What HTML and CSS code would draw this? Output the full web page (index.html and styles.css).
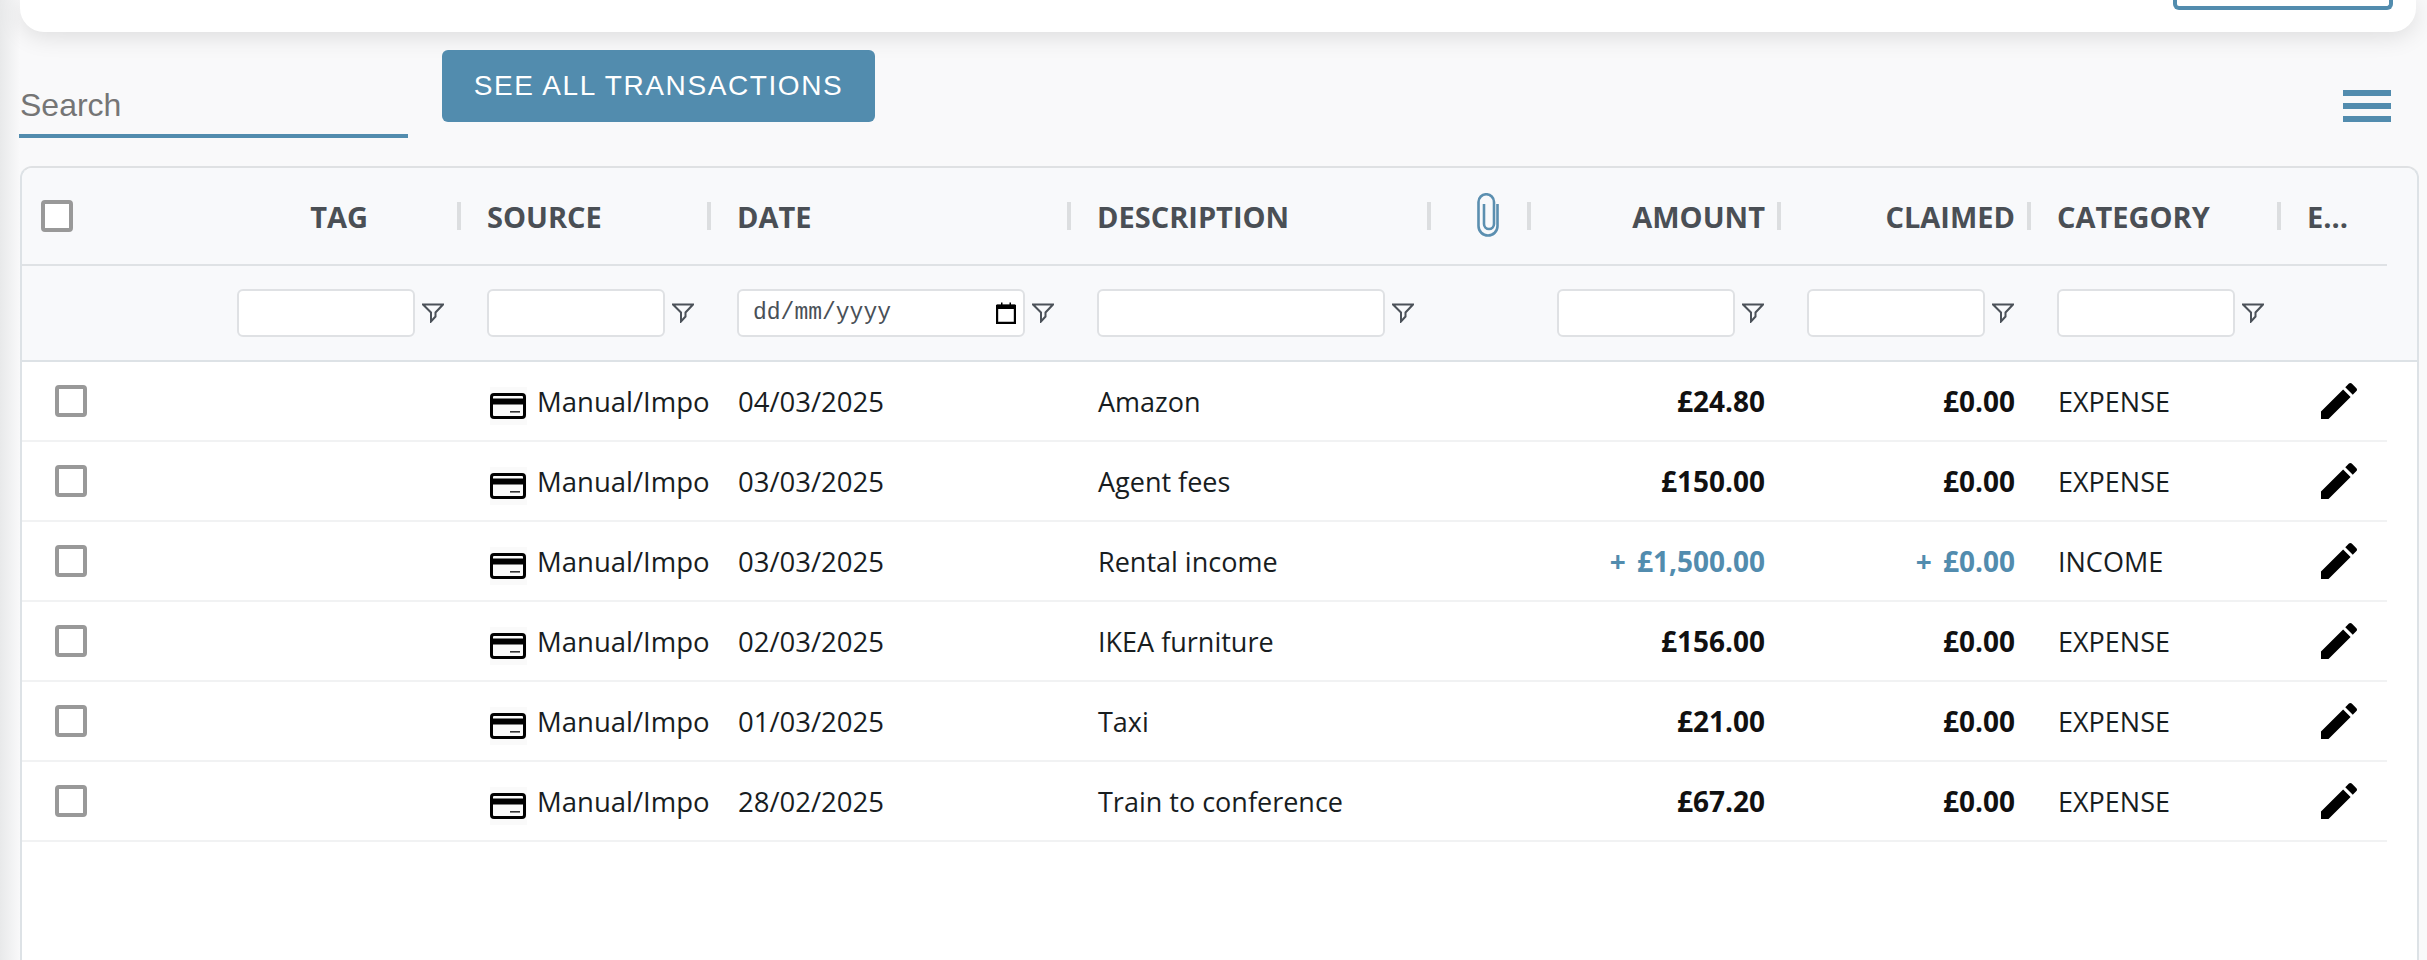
FILE: index.html
```html
<!DOCTYPE html>
<html lang="en">
<head>
    <meta charset="UTF-8">
    <title>Transactions</title>
    <link rel="stylesheet" href="styles.css">
</head>
<body>
    <svg class="defs" width="0" height="0">
        <symbol id="funnel" viewBox="0 0 22 20">
            <path d="M1 1.5H21L13.5 9.5V13.5L9 18.5V9.5Z" fill="none" stroke="#4b5158" stroke-width="2"/>
        </symbol>
        <symbol id="card" viewBox="0 0 36 26">
            <rect x="1.5" y="1.5" width="33" height="23" rx="2.5" fill="none" stroke="#000" stroke-width="3"/>
            <rect x="2" y="5.5" width="32" height="6" fill="#000"/>
            <rect x="20" y="18" width="10" height="1.6" fill="#333"/>
        </symbol>
        <symbol id="pencil" viewBox="0 0 24 24">
            <path d="M3 17.25V21h3.75L17.81 9.94l-3.75-3.75L3 17.25zM20.71 7.04c.39-.39.39-1.02 0-1.41l-2.34-2.34c-.39-.39-1.02-.39-1.41 0l-1.83 1.83 3.75 3.75 1.83-1.83z"/>
        </symbol>
    </svg>

    <div class="top-card">
        <div class="outline-btn"></div>
    </div>

    <div class="toolbar">
        <input class="search" type="text" placeholder="Search">
        <button class="see-all" type="button">SEE ALL TRANSACTIONS</button>
        <div class="menu-icon"><span></span><span></span><span></span></div>
    </div>

    <div class="grid">
        <div class="row head-row">
            <div class="cell check-head"><input type="checkbox"></div>
            <div class="cell head right tag-head">TAG</div>
            <div class="cell head">SOURCE</div>
            <div class="cell head">DATE</div>
            <div class="cell head">DESCRIPTION</div>
            <div class="cell head clip-head">
                <svg width="24" height="46" viewBox="0 0 24 46"><path d="M21.5 11V33a9.5 9.5 0 0 1-19 0V9a7.75 7.75 0 0 1 15.5 0V31a5 5 0 0 1-10 0V11" fill="none" stroke="#5b8fb0" stroke-width="2.6"/></svg>
            </div>
            <div class="cell head right">AMOUNT</div>
            <div class="cell head right">CLAIMED</div>
            <div class="cell head">CATEGORY</div>
            <div class="cell head no-sep">E...</div>
        </div>

        <div class="row filter-row">
            <div class="cell"></div>
            <div class="cell filter"><input type="text"><svg class="funnel"><use href="#funnel"/></svg></div>
            <div class="cell filter"><input type="text"><svg class="funnel"><use href="#funnel"/></svg></div>
            <div class="cell filter">
                <div class="date-input">
                    <span>dd/mm/yyyy</span>
                    <svg width="20" height="22" viewBox="0 0 20 22"><path d="M1 4H19V21H1Z" fill="none" stroke="#000" stroke-width="2.4"/><path d="M1 2.5H5V0.5H6.5V2.5H13.5V0.5H15V2.5H19V7H1Z"/></svg>
                </div>
                <svg class="funnel"><use href="#funnel"/></svg>
            </div>
            <div class="cell filter"><input type="text"><svg class="funnel"><use href="#funnel"/></svg></div>
            <div class="cell"></div>
            <div class="cell filter"><input type="text"><svg class="funnel"><use href="#funnel"/></svg></div>
            <div class="cell filter"><input type="text"><svg class="funnel"><use href="#funnel"/></svg></div>
            <div class="cell filter"><input type="text"><svg class="funnel"><use href="#funnel"/></svg></div>
            <div class="cell"></div>
        </div>

        <div class="row body-row">
            <div class="cell check-cell"><input type="checkbox"></div>
            <div class="cell"></div>
            <div class="cell source"><span class="card-wrap"><svg width="36" height="26"><use href="#card"/></svg></span><span class="source-text">Manual/Import</span></div>
            <div class="cell date">04/03/2025</div>
            <div class="cell">Amazon</div>
            <div class="cell"></div>
            <div class="cell money">£24.80</div>
            <div class="cell money">£0.00</div>
            <div class="cell">EXPENSE</div>
            <div class="cell edit"><svg width="48" height="48"><use href="#pencil"/></svg></div>
        </div>
        <div class="row body-row">
            <div class="cell check-cell"><input type="checkbox"></div>
            <div class="cell"></div>
            <div class="cell source"><span class="card-wrap"><svg width="36" height="26"><use href="#card"/></svg></span><span class="source-text">Manual/Import</span></div>
            <div class="cell date">03/03/2025</div>
            <div class="cell">Agent fees</div>
            <div class="cell"></div>
            <div class="cell money">£150.00</div>
            <div class="cell money">£0.00</div>
            <div class="cell">EXPENSE</div>
            <div class="cell edit"><svg width="48" height="48"><use href="#pencil"/></svg></div>
        </div>
        <div class="row body-row">
            <div class="cell check-cell"><input type="checkbox"></div>
            <div class="cell"></div>
            <div class="cell source"><span class="card-wrap"><svg width="36" height="26"><use href="#card"/></svg></span><span class="source-text">Manual/Import</span></div>
            <div class="cell date">03/03/2025</div>
            <div class="cell">Rental income</div>
            <div class="cell"></div>
            <div class="cell money income">+&nbsp;£1,500.00</div>
            <div class="cell money income">+&nbsp;£0.00</div>
            <div class="cell">INCOME</div>
            <div class="cell edit"><svg width="48" height="48"><use href="#pencil"/></svg></div>
        </div>
        <div class="row body-row">
            <div class="cell check-cell"><input type="checkbox"></div>
            <div class="cell"></div>
            <div class="cell source"><span class="card-wrap"><svg width="36" height="26"><use href="#card"/></svg></span><span class="source-text">Manual/Import</span></div>
            <div class="cell date">02/03/2025</div>
            <div class="cell">IKEA furniture</div>
            <div class="cell"></div>
            <div class="cell money">£156.00</div>
            <div class="cell money">£0.00</div>
            <div class="cell">EXPENSE</div>
            <div class="cell edit"><svg width="48" height="48"><use href="#pencil"/></svg></div>
        </div>
        <div class="row body-row">
            <div class="cell check-cell"><input type="checkbox"></div>
            <div class="cell"></div>
            <div class="cell source"><span class="card-wrap"><svg width="36" height="26"><use href="#card"/></svg></span><span class="source-text">Manual/Import</span></div>
            <div class="cell date">01/03/2025</div>
            <div class="cell">Taxi</div>
            <div class="cell"></div>
            <div class="cell money">£21.00</div>
            <div class="cell money">£0.00</div>
            <div class="cell">EXPENSE</div>
            <div class="cell edit"><svg width="48" height="48"><use href="#pencil"/></svg></div>
        </div>
        <div class="row body-row">
            <div class="cell check-cell"><input type="checkbox"></div>
            <div class="cell"></div>
            <div class="cell source"><span class="card-wrap"><svg width="36" height="26"><use href="#card"/></svg></span><span class="source-text">Manual/Import</span></div>
            <div class="cell date">28/02/2025</div>
            <div class="cell">Train to conference</div>
            <div class="cell"></div>
            <div class="cell money">£67.20</div>
            <div class="cell money">£0.00</div>
            <div class="cell">EXPENSE</div>
            <div class="cell edit"><svg width="48" height="48"><use href="#pencil"/></svg></div>
        </div>
    </div>
</body>
</html>
```

FILE: styles.css
```css
html, body {
    height: 100%;
}

body {
    margin: 0;
    overflow: hidden;
    font-family: "Open Sans", sans-serif;
    background: linear-gradient(to right, #e8e9ea, #f9f9fa 20px);
}

.defs {
    position: absolute;
}

/* end of the card above the table */
.top-card {
    display: flex;
    justify-content: flex-end;
    box-sizing: border-box;
    width: 2396px;
    height: 32px;
    margin-left: 20px;
    padding-right: 23px;
    background-color: #fff;
    border-radius: 0 0 24px 24px;
    box-shadow: 0 4px 24px rgba(0, 0, 0, 0.12);
}

.outline-btn {
    box-sizing: border-box;
    width: 220px;
    height: 10px;
    border: 4px solid #528cae;
    border-top: none;
    border-radius: 0 0 6px 6px;
}

.toolbar {
    display: flex;
    align-items: flex-start;
    height: 134px;
    padding-left: 19px;
}

.search {
    box-sizing: border-box;
    width: 389px;
    height: 48px;
    margin-top: 58px;
    padding: 0 1px 14px;
    border: none;
    border-bottom: 4px solid #528cae;
    background: transparent;
    font-family: "Liberation Sans", sans-serif;
    font-size: 32px;
    outline: none;
}

.search::placeholder {
    color: #757575;
}

.see-all {
    width: 433px;
    height: 72px;
    margin-top: 18px;
    margin-left: 34px;
    padding: 0;
    border: none;
    border-radius: 6px;
    background-color: #528cae;
    color: #fff;
    font-family: "Liberation Sans", sans-serif;
    font-size: 28px;
    letter-spacing: 1.6px;
}

.menu-icon {
    display: flex;
    flex-direction: column;
    gap: 7.5px;
    width: 48px;
    margin-top: 58px;
    margin-left: auto;
    margin-right: 36px;
}

.menu-icon span {
    height: 5.5px;
    background-color: #528cae;
}

.grid {
    box-sizing: border-box;
    width: 2399px;
    height: 830px;
    margin-left: 20px;
    background-color: #fff;
    border: 2px solid #dde2e6;
    border-top-color: #dfe1e3;
    border-radius: 12px 12px 0 0;
    overflow: hidden;
}

.row {
    display: grid;
    grid-template-columns: 189px 250px 250px 360px 360px 100px 250px 250px 250px 106px;
    color: #181d1f;
    font-size: 27px;
}

.head-row {
    height: 98px;
    background: linear-gradient(#dfe2e5, #dfe2e5) no-repeat 0 100% / 2365px 2px #f8f9fb;
}

.filter-row {
    height: 96px;
    background-color: #f8f9fb;
    border-bottom: 2px solid #dde2e6;
    box-sizing: border-box;
}

.body-row {
    width: 2365px;
    height: 80px;
    border-bottom: 2px solid #f1f2f3;
    box-sizing: border-box;
}

.cell {
    display: flex;
    align-items: center;
    min-width: 0;
    padding-left: 27px;
    white-space: nowrap;
}

.head {
    position: relative;
    padding-left: 26px;
    padding-bottom: 2px;
    color: #4a4f55;
    font-weight: 700;
    font-size: 29px;
}

/* column resize handle */
.head::after {
    content: "";
    position: absolute;
    top: 34px;
    right: 0;
    width: 4px;
    height: 28px;
    background-color: #dcdee0;
}

.head.no-sep::after {
    display: none;
}

.right {
    justify-content: flex-end;
    padding-right: 16px;
}

.tag-head {
    padding-right: 93px;
}

.clip-head {
    padding-left: 45px;
}

.check-head {
    padding-left: 19px;
    padding-bottom: 2px;
}

.check-cell {
    padding-left: 33px;
}

input[type="checkbox"] {
    appearance: none;
    box-sizing: border-box;
    width: 32px;
    height: 32px;
    margin: 0;
    background-color: #fff;
    border: 4px solid #999;
    border-radius: 4px;
}

.filter {
    gap: 7px;
    padding-left: 26px;
    padding-right: 17px;
}

.filter input,
.date-input {
    box-sizing: border-box;
    flex: 1;
    min-width: 0;
    height: 48px;
    background-color: #fff;
    border: 2px solid #dfe1e4;
    border-radius: 6px;
}

.date-input {
    display: flex;
    align-items: center;
    justify-content: space-between;
    padding: 0 6px 0 14px;
    color: #495057;
    font-family: "Liberation Mono", monospace;
    font-size: 23px;
}

.date-input svg {
    flex: none;
    margin-right: 1px;
}

.funnel {
    flex: none;
    width: 22px;
    height: 20px;
}

.source {
    padding-left: 29px;
    font-size: 27.5px;
}

.card-wrap {
    display: flex;
    align-items: center;
    flex: none;
    height: 38px;
    margin-top: 10px;
    margin-right: 10px;
    padding: 0 1px 0 0;
    background-color: #fafafa;
}

.source-text {
    width: 178px;
    overflow: hidden;
}

.date {
    font-size: 27.5px;
}

.money {
    justify-content: flex-end;
    padding-right: 16px;
    font-weight: 700;
    font-size: 28px;
    color: #111;
}

.income {
    color: #528cae;
    word-spacing: 4px;
}

.edit {
    padding-left: 34px;
}
```
